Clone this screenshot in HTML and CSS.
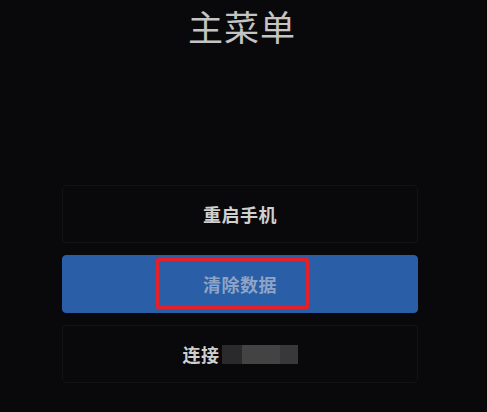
FILE: index.html
```html
<!DOCTYPE html>
<html lang="zh-CN">
<head>
<meta charset="utf-8">
<title>主菜单</title>
<link rel="stylesheet" href="styles.css">
</head>
<body>
<main class="screen">
  <h1 class="title">主菜单</h1>
  <div class="menu">
    <div class="item">重启手机</div>
    <div class="item item-active">
      <span class="label-dim">清除数据</span>
      <span class="highlight"></span>
    </div>
    <div class="item">连接<span class="blur"><span class="seg seg-a"></span><span class="seg seg-b"></span><span class="seg seg-c"></span></span></div>
  </div>
</main>
</body>
</html>
```
FILE: styles.css
```css
* { box-sizing: border-box; }
html, body { margin: 0; padding: 0; }
body {
  background: #09090b;
  width: 487px;
  height: 412px;
  overflow: hidden;
  font-family: "Noto Sans CJK SC", "Noto Sans", sans-serif;
}
.screen {
  display: flex;
  flex-direction: column;
  align-items: flex-start;
}
.title {
  margin: 0;
  width: 100%;
  text-align: center;
  font-size: 35px;
  line-height: normal;
  font-weight: 400;
  color: #c4c4c4;
  letter-spacing: 1px;
  padding-right: 3px;
}
.menu {
  margin-top: 134px;
  margin-left: 62px;
  width: 356px;
  display: flex;
  flex-direction: column;
  gap: 12px;
}
.item {
  position: relative;
  height: 58px;
  border: 1px solid #131315;
  border-radius: 4px;
  display: flex;
  align-items: center;
  justify-content: center;
  font-size: 18px;
  font-weight: 700;
  color: #cfcfcf;
  letter-spacing: 0.5px;
}
.item-active {
  background: #2a5ea6;
  border-color: #2a5ea6;
}
.label-dim {
  color: #8ea4c6;
}
.highlight {
  position: absolute;
  left: 93px;
  top: 2px;
  width: 153px;
  height: 51px;
  border: 3px solid #e3212b;
  border-radius: 2px;
}
.blur {
  display: inline-flex;
  height: 19px;
  margin-left: 2px;
}
.seg { display: block; height: 100%; }
.seg-a { width: 20px; background: #2a2a2c; }
.seg-b { width: 38px; background: #434344; }
.seg-c { width: 18px; background: #38383a; }
```
